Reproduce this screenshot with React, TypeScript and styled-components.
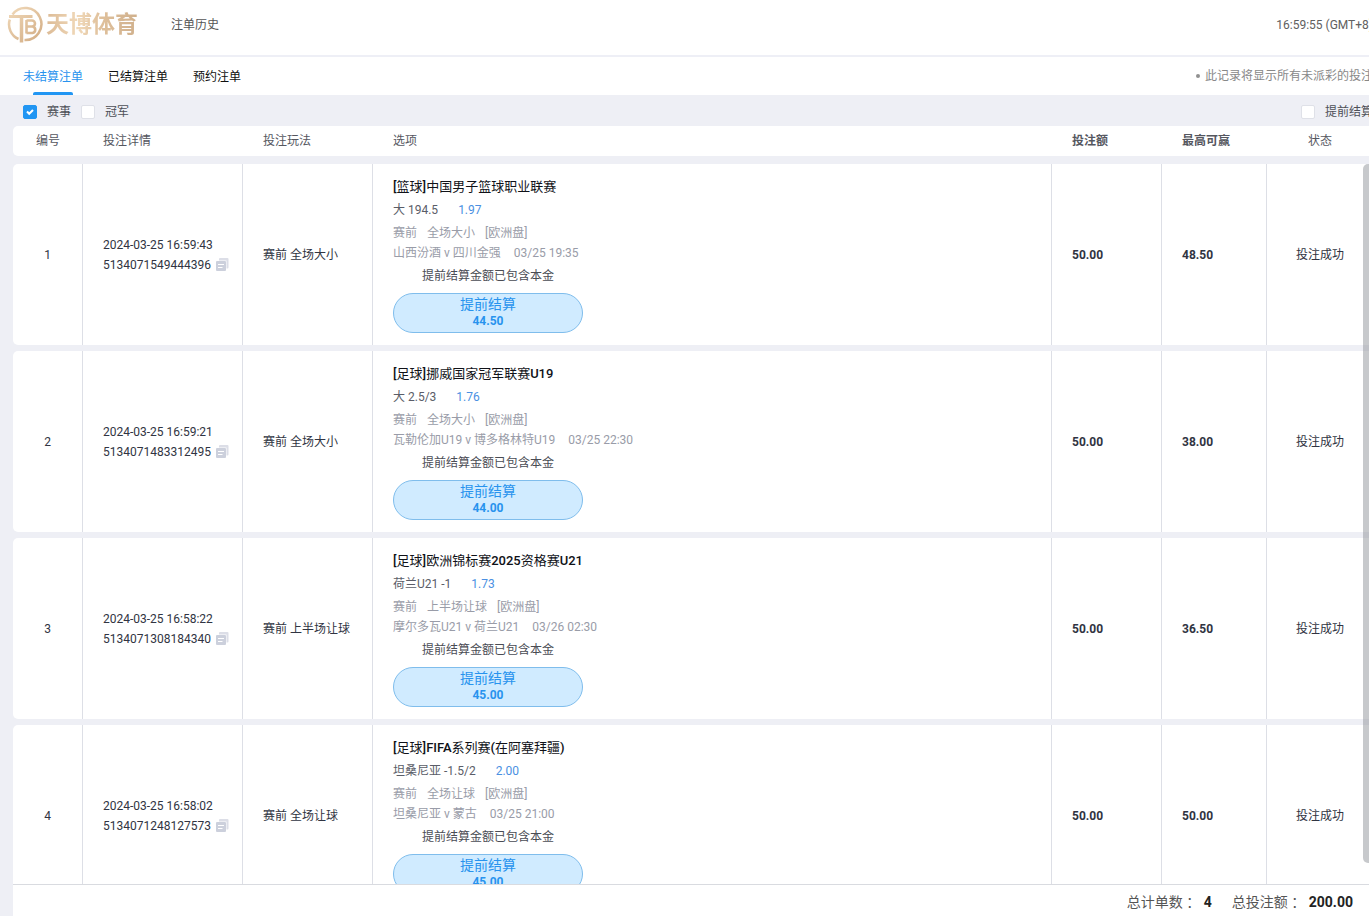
import React from "react";
import styled, { createGlobalStyle } from "styled-components";

const Global = createGlobalStyle`
  * { box-sizing: border-box; }
  body {
    margin: 0;
    background: #eeeff5;
    color: #303442;
    font: 12px/20px Roboto, "Noto Sans CJK SC", sans-serif;
  }
  button, input { font: inherit; margin: 0; }
`;

const Viewport = styled.div`
  height: 100vh;
  overflow: hidden;
`;

const Page = styled.div`
  display: flex;
  flex-direction: column;
  height: 100%;
  min-width: 1386px;
`;

const Header = styled.header`
  display: flex;
  align-items: center;
  height: 57px;
  padding: 0 13px 6px 7px;
  background: #fff;
  border-bottom: 2px solid #eeeff6;
`;

const Brand = styled.a`
  display: flex;
  align-items: center;
  gap: 2px;
  text-decoration: none;
`;

const BrandName = styled.span`
  font-size: 23px;
  line-height: 36px;
  font-weight: 700;
  color: transparent;
  background: linear-gradient(90deg, #dcbb96, #f0d8b8 35%, #dfc09b 60%, #d0b08c);
  background-clip: text;
`;

const PageTitle = styled.h1`
  margin: 0 auto 0 33px;
  font-size: 12px;
  line-height: 20px;
  font-weight: 400;
  color: #555;
`;

const Clock = styled.time`
  color: #606060;
`;

const TabBar = styled.nav`
  display: flex;
  align-items: stretch;
  height: 38px;
  padding: 0 13px 0 23px;
  background: #fff;
`;

const Tab = styled.button<{ $active?: boolean }>`
  position: relative;
  margin-right: 25px;
  padding: 2px 0 0;
  border: 0;
  background: none;
  color: ${(p) => (p.$active ? "#2893ee" : "#101010")};
  &::after {
    content: "";
    display: ${(p) => (p.$active ? "block" : "none")};
    position: absolute;
    left: 50%;
    bottom: 0;
    width: 40px;
    height: 3px;
    margin-left: -20px;
    border-radius: 2px 2px 0 0;
    background: #2196f3;
  }
`;

const Hint = styled.p`
  display: flex;
  align-items: center;
  gap: 5px;
  width: 177px;
  margin: 0 0 0 auto;
  white-space: nowrap;
  color: #888;
  &::before {
    content: "";
    width: 4px;
    height: 4px;
    border-radius: 50%;
    background: #909090;
  }
`;

const Filters = styled.div`
  display: flex;
  align-items: center;
  height: 31px;
  padding: 2px 13px 0 23px;
`;

const Check = styled.label`
  display: flex;
  align-items: center;
  gap: 10px;
  margin-right: 10px;
  color: #4d4f57;
  &:last-child {
    margin: 0 0 0 auto;
  }
`;

const Box = styled.input`
  appearance: none;
  width: 14px;
  height: 14px;
  border: 1px solid #dfe1e8;
  border-radius: 2px;
  background: #fff;
  &:checked {
    border-color: #2196f3;
    background: #2196f3
      url("data:image/svg+xml,%3Csvg xmlns='http://www.w3.org/2000/svg' viewBox='0 0 12 12'%3E%3Cpath d='M3 5.500l2.200 2.300L9 4' fill='none' stroke='white' stroke-width='2'/%3E%3C/svg%3E");
  }
`;

const ListArea = styled.main`
  position: relative;
  display: flex;
  flex: 1;
  min-height: 0;
  margin: 0 13px;
`;

const Table = styled.table`
  display: flex;
  flex: 1;
  flex-direction: column;
  gap: 8px;
  min-height: 0;
`;

const Head = styled.thead`
  display: block;
`;

const Body = styled.tbody`
  display: flex;
  flex: 1;
  flex-direction: column;
  gap: 6px;
  min-height: 0;
  overflow: hidden;
`;

const Row = styled.tr`
  display: grid;
  flex: none;
  grid-template-columns: 70px 160px 130px 1fr 110px 105px 106px;
  border-radius: 5px;
  background: #fff;
`;

const HeadCell = styled.th<{ $center?: boolean; $bold?: boolean }>`
  padding: 5px 20px;
  text-align: ${(p) => (p.$center ? "center" : "left")};
  font-weight: ${(p) => (p.$bold ? 700 : 400)};
  color: #55575f;
`;

const Cell = styled.td<{ $center?: boolean; $bold?: boolean }>`
  display: flex;
  flex-direction: column;
  justify-content: center;
  align-items: ${(p) => (p.$center ? "center" : "flex-start")};
  padding: 0 ${(p) => (p.$center ? 0 : 20)}px;
  font-weight: ${(p) => (p.$bold ? 700 : 400)};
  white-space: nowrap;
  border-right: 1px solid #dddfe6;
  &:last-child {
    border-right: 0;
  }
`;

const Selection = styled(Cell)`
  padding: 12px 20px;
`;

const OrderNo = styled.div`
  display: flex;
  align-items: center;
  gap: 5px;
`;

const CopyButton = styled.button`
  display: flex;
  padding: 0;
  border: 0;
  background: none;
`;

const League = styled.div`
  font-family: "Roboto Medium", Roboto, "Noto Sans CJK SC", sans-serif;
  font-size: 13px;
  line-height: 22px;
  color: #101218;
`;

const Pick = styled.div`
  display: flex;
  gap: 20px;
  line-height: 24px;
  color: #5a5d68;
`;

const Odds = styled.span`
  color: #4a90e2;
`;

const Meta = styled.div<{ $gap: number }>`
  display: flex;
  gap: ${(p) => p.$gap}px;
  line-height: 20px;
  color: #999ca8;
`;

const MatchInfo = styled.div`
  padding-top: 1px;
`;

const CashOut = styled.div`
  width: 190px;
  line-height: 26px;
  text-align: center;
  color: #4a4c54;
`;

const CashOutButton = styled.button`
  display: flex;
  flex-direction: column;
  align-items: center;
  width: 190px;
  height: 40px;
  margin-top: 4px;
  padding: 1px 0 0;
  border: 1px solid #7fbdec;
  border-radius: 20px;
  background: #d0ebff;
  color: #2893ee;
  font-size: 14px;
  line-height: 18px;
  strong {
    font-size: 12px;
    line-height: 16px;
  }
`;

const ScrollThumb = styled.div`
  position: absolute;
  top: 38px;
  right: 0;
  bottom: 21px;
  width: 10px;
  border-radius: 5px;
  background: rgba(144, 147, 153, 0.5);
`;

const Summary = styled.footer`
  display: flex;
  justify-content: flex-end;
  gap: 20px;
  height: 32px;
  margin: 0 13px;
  padding: 0 20px;
  border-top: 1px solid #d9dbe0;
  background: #fff;
  font-size: 14px;
  line-height: 34px;
  color: #555;
`;

const Total = styled.span`
  display: flex;
  strong {
    margin-left: 7px;
    color: #222;
  }
`;

/* The Traditional face centres the full-width colon in its square. */
const Colon = styled.span`
  font-family: "Noto Sans CJK TC", sans-serif;
`;

const bets = [
  { time: "2024-03-25 16:59:43", no: "5134071549444396", play: "赛前 全场大小", league: "[篮球]中国男子篮球职业联赛", pick: "大 194.5", odds: "1.97", market: "全场大小", match: "山西汾酒 v 四川金强", start: "03/25 19:35", cash: "44.50", stake: "50.00", win: "48.50" },
  { time: "2024-03-25 16:59:21", no: "5134071483312495", play: "赛前 全场大小", league: "[足球]挪威国家冠军联赛U19", pick: "大 2.5/3", odds: "1.76", market: "全场大小", match: "瓦勒伦加U19 v 博多格林特U19", start: "03/25 22:30", cash: "44.00", stake: "50.00", win: "38.00" },
  { time: "2024-03-25 16:58:22", no: "5134071308184340", play: "赛前 上半场让球", league: "[足球]欧洲锦标赛2025资格赛U21", pick: "荷兰U21 -1", odds: "1.73", market: "上半场让球", match: "摩尔多瓦U21 v 荷兰U21", start: "03/26 02:30", cash: "45.00", stake: "50.00", win: "36.50" },
  { time: "2024-03-25 16:58:02", no: "5134071248127573", play: "赛前 全场让球", league: "[足球]FIFA系列赛(在阿塞拜疆)", pick: "坦桑尼亚 -1.5/2", odds: "2.00", market: "全场让球", match: "坦桑尼亚 v 蒙古", start: "03/25 21:00", cash: "45.00", stake: "50.00", win: "50.00" },
];

const Emblem = () => (
  <svg width="37" height="37" viewBox="0 0 37 37" fill="none" aria-hidden="true">
    <defs>
      <linearGradient id="gold" gradientUnits="userSpaceOnUse" x1="4" y1="2" x2="32" y2="34">
        <stop offset="0" stopColor="#f0d8b8" />
        <stop offset="1" stopColor="#d3ae86" />
      </linearGradient>
    </defs>
    <g stroke="url(#gold)">
      <path d="M5.500 8.500A16 16 0 1 1 17.500 34" strokeWidth="2.500" />
      <path d="M2.800 13.500A16 16 0 0 0 11.500 33" strokeWidth="2.500" />
      <path d="M2 10.500h23.500" strokeWidth="3" />
      <path d="M14.500 11v25.500" strokeWidth="3.500" />
      <path d="M19.500 14v13.500M19.500 14.500h5.500a3 3 0 0 1 0 6h-5h5.500a3.300 3.300 0 0 1 0 6.500h-6" strokeWidth="2.600" />
    </g>
  </svg>
);

const CopyIcon = () => (
  <svg width="13" height="13" viewBox="0 0 13 13" aria-hidden="true">
    <path d="M3 1a1 1 0 0 1 1-1h7.500a1 1 0 0 1 1 1v8.500a1 1 0 0 1-1 1H10.500V2.500H3z" fill="#dcdee7" />
    <rect y="3" width="10" height="10" rx="1" fill="#ccd0dc" />
    <path d="M2 6.500h6M2 9.500h4.500" stroke="#fff" />
  </svg>
);

export default function App() {
  return (
    <Viewport>
      <Global />
      <Page>
        <Header>
          <Brand href="#">
            <Emblem />
            <BrandName>天博体育</BrandName>
          </Brand>
          <PageTitle>注单历史</PageTitle>
          <Clock>16:59:55 (GMT+8)</Clock>
        </Header>
        <TabBar>
          <Tab $active>未结算注单</Tab>
          <Tab>已结算注单</Tab>
          <Tab>预约注单</Tab>
          <Hint>此记录将显示所有未派彩的投注</Hint>
        </TabBar>
        <Filters>
          <Check><Box type="checkbox" defaultChecked />赛事</Check>
          <Check><Box type="checkbox" />冠军</Check>
          <Check><Box type="checkbox" />提前结算</Check>
        </Filters>
        <ListArea>
          <Table>
            <Head>
              <Row>
                <HeadCell $center>编号</HeadCell>
                <HeadCell>投注详情</HeadCell>
                <HeadCell>投注玩法</HeadCell>
                <HeadCell>选项</HeadCell>
                <HeadCell $bold>投注额</HeadCell>
                <HeadCell $bold>最高可赢</HeadCell>
                <HeadCell $center>状态</HeadCell>
              </Row>
            </Head>
            <Body>
              {bets.map((b, i) => (
                <Row key={b.no}>
                  <Cell $center>{i + 1}</Cell>
                  <Cell>
                    <time>{b.time}</time>
                    <OrderNo>
                      {b.no}
                      <CopyButton aria-label="复制"><CopyIcon /></CopyButton>
                    </OrderNo>
                  </Cell>
                  <Cell>{b.play}</Cell>
                  <Selection>
                    <League>{b.league}</League>
                    <Pick>{b.pick}<Odds>{b.odds}</Odds></Pick>
                    <MatchInfo>
                      <Meta $gap={10}><span>赛前</span><span>{b.market}</span><span>[欧洲盘]</span></Meta>
                      <Meta $gap={13}><span>{b.match}</span><span>{b.start}</span></Meta>
                    </MatchInfo>
                    <CashOut>提前结算金额已包含本金</CashOut>
                    <CashOutButton>提前结算<strong>{b.cash}</strong></CashOutButton>
                  </Selection>
                  <Cell $bold>{b.stake}</Cell>
                  <Cell $bold>{b.win}</Cell>
                  <Cell $center>投注成功</Cell>
                </Row>
              ))}
            </Body>
          </Table>
          <ScrollThumb />
        </ListArea>
        <Summary>
          <Total>总计单数<Colon>：</Colon><strong>4</strong></Total>
          <Total>总投注额<Colon>：</Colon><strong>200.00</strong></Total>
        </Summary>
      </Page>
    </Viewport>
  );
}
